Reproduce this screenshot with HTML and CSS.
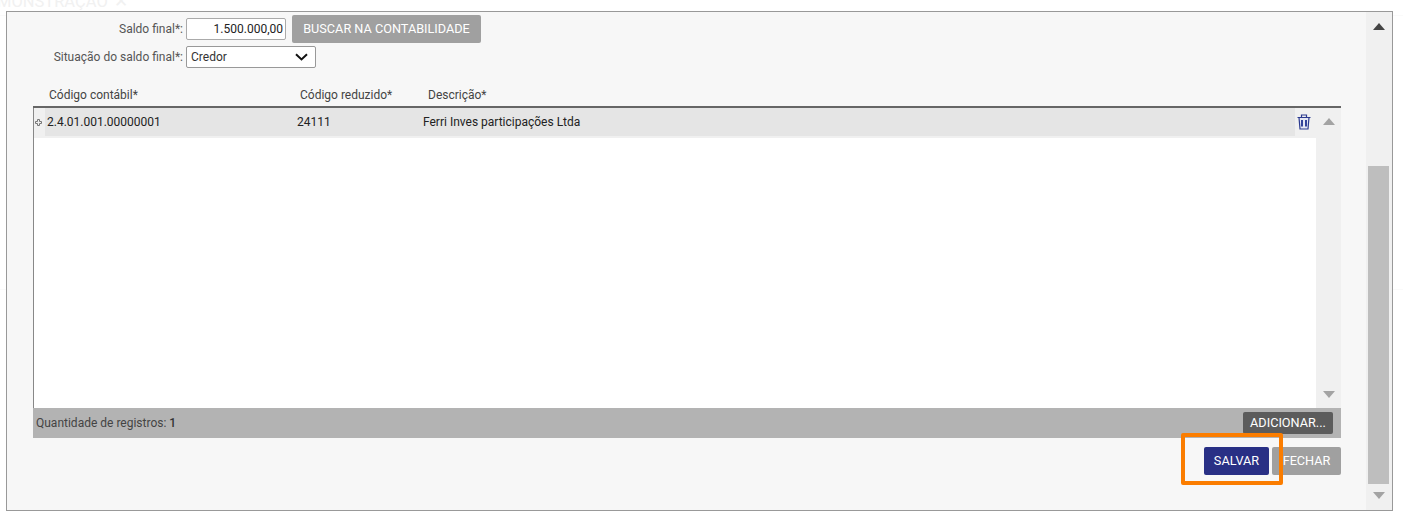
FILE: index.html
```html
<!DOCTYPE html>
<html lang="pt-BR">
<head>
<meta charset="utf-8">
<title>Saldo final</title>
<link rel="stylesheet" href="styles.css">
</head>
<body>
<div class="ghost ghost-title">MONSTRAÇÃO <span class="ghost-x">✕</span></div>
<div class="ghost-line top"></div>
<div class="ghost-line mid"></div>
<section class="dialog">
  <div class="content">
    <div class="form-row first">
      <label class="label">Saldo final*:</label>
      <input class="money" value="1.500.000,00">
      <button class="btn grey lookup">BUSCAR NA CONTABILIDADE</button>
    </div>
    <div class="form-row second">
      <label class="label">Situação do saldo final*:</label>
      <div class="select">
        <span>Credor</span>
        <svg width="13" height="8" viewBox="0 0 13 8"><path d="M1 1.200 6.500 6.400 12 1.200" fill="none" stroke="#111" stroke-width="2"/></svg>
      </div>
    </div>
    <div class="grid">
      <div class="grid-head">
        <span class="h1">Código contábil*</span>
        <span class="h2">Código reduzido*</span>
        <span class="h3">Descrição*</span>
      </div>
      <div class="grid-main">
        <div class="grid-body">
          <div class="row">
            <span class="expander"><svg width="7" height="7" viewBox="0 0 7 7"><path d="M2.500.5h2v2h2v2h-2v2h-2v-2h-2v-2h2z" fill="#eee" stroke="#777" stroke-width="1"/></svg></span>
            <span class="cell c1">2.4.01.001.00000001</span>
            <span class="cell c2">24111</span>
            <span class="cell c3">Ferri Inves participações Ltda</span>
            <span class="trash">
              <svg width="14" height="16" viewBox="0 0 14 16"><path d="M2 3.500l1 11.500h8l1-11.500z" fill="#e4e7f4"/><path d="M.5 3.500h13M4.500 3.500V1h5v2.500M2 3.500l1 11.500h8l1-11.500" fill="none" stroke="#2b3a8f" stroke-width="1.200"/><path d="M5 6v6.500M9 6v6.500" stroke="#33439a" stroke-width="2"/></svg>
            </span>
          </div>
          <div class="row-gap"></div>
        </div>
        <div class="inner-scroll">
          <svg width="12" height="7" viewBox="0 0 12 7"><path d="M6 0 12 7H0z" fill="#a3a3a3"/></svg>
          <svg width="12" height="7" viewBox="0 0 12 7"><path d="M0 0H12L6 7z" fill="#a3a3a3"/></svg>
        </div>
      </div>
      <div class="grid-foot">
        <span class="count">Quantidade de registros: <b>1</b></span>
        <button class="btn dark add">ADICIONAR...</button>
      </div>
    </div>
    <div class="actions">
      <button class="btn navy save">SALVAR</button>
      <button class="btn grey close">FECHAR</button>
    </div>
  </div>
  <div class="outer-scroll">
    <svg width="12" height="7" viewBox="0 0 12 7"><path d="M6 0 12 7H0z" fill="#444"/></svg>
    <div class="thumb-track"><div class="thumb"></div></div>
    <svg width="12" height="7" viewBox="0 0 12 7"><path d="M0 0H12L6 7z" fill="#a3a3a3"/></svg>
  </div>
  <div class="highlight"></div>
</section>
</body>
</html>
```
FILE: styles.css
```css
* { box-sizing: border-box; }
html, body { margin: 0; height: 100%; }
body {
  background: #fff;
  font-family: Roboto, "Liberation Sans", sans-serif;
  font-size: 12px;
  color: #222;
  padding: 11px 10px 14px 6px;
  position: relative;
  overflow: hidden;
}
.ghost { position: absolute; color: #f1f1f1; }
.ghost-title { left: -3px; top: -8px; font-size: 16.500px; white-space: nowrap; }
.ghost-x { margin-left: 2px; }
.ghost-line { position: absolute; left: 0; right: 0; height: 1px; background: #fafafa; }
.ghost-line.top { top: 15px; }
.ghost-line.mid { top: 289px; }
.dialog {
  position: relative;
  width: 1387px;
  height: 500px;
  display: flex;
  background: #f7f7f7;
  border: 1px solid #999;
}
.content { flex: 1; min-width: 0; padding: 2px 25px 0 26px; }
.form-row { display: flex; align-items: center; }
.first { height: 30px; }
.second { height: 27px; margin-top: -1px; }
.label { width: 153px; text-align: right; padding-right: 3px; color: #555; font-size: 12px; }
.money {
  width: 100px; height: 22px; padding: 0 2px 0 0;
  border: 1px solid #aaa; border-radius: 2px; background: #fff;
  text-align: right; font: 12px Roboto, sans-serif; color: #222;
}
.btn {
  border: 0; border-radius: 2px; color: #fff; font-family: Roboto, sans-serif;
  font-size: 12.700px; font-weight: 400; padding: 0 0 2px; text-align: center;
}
.grey { background: #a0a0a0; }
.lookup { width: 189px; height: 28px; margin-left: 6px; }
.select {
  width: 130px; height: 22px; display: flex; align-items: center; justify-content: space-between;
  padding: 0 7px 0 4px; border: 1px solid #999; border-radius: 2px; background: #fff; color: #333;
}
.grid { margin: 8px 0 0 0; }
.grid-head { position: relative; height: 28px; color: #444; }
.grid-head span { position: absolute; top: 10px; }
.h1 { left: 16px; }
.h2 { left: 267px; }
.h3 { left: 395px; }
.grid-main { display: flex; height: 302px; border-top: 2px solid #666; }
.grid-body { flex: 1; min-width: 0; background: #fff; border-left: 1px solid #888; }
.row { position: relative; height: 28px; display: flex; align-items: center; background: #f0f0f0; }
.row-gap { height: 2px; background: #f0f0f0; }
.expander { position: relative; width: 11px; display: flex; padding-left: 1px; }
.cell { position: absolute; top: 7px; color: #222; }
.row::before { content: ""; position: absolute; left: 11px; top: 0; bottom: 0; width: 1250px; background: #e5e5e5; }
.c1 { left: 13px; }
.c2 { left: 263px; }
.c3 { left: 389px; }
.trash { position: absolute; left: 1263px; top: 6px; }
.inner-scroll {
  width: 25px; display: flex; flex-direction: column; justify-content: space-between; align-items: center;
  background: #f0f0f0; padding: 10px 0 10px;
}
.grid-foot {
  height: 30px; display: flex; align-items: center; justify-content: space-between;
  background: #b3b3b3; padding: 0 8px 0 3px; color: #444;
}
.count { margin-top: -1px; }
.count b { font-weight: 500; color: #333; }
.dark { background: #5c5c5c; }
.add { width: 90px; height: 22px; }
.actions { display: flex; justify-content: flex-end; gap: 3px; margin-top: 9px; }
.actions .btn { height: 28px; }
.navy { background: #293085; }
.save { width: 65px; }
.close { width: 69px; }
.outer-scroll {
  width: 26px; background: #f0f0f0; display: flex; flex-direction: column; align-items: center;
  padding: 11px 0 11px;
}
.thumb-track { flex: 1; width: 100%; padding: 136px 3px 0 2px; }
.thumb { width: 21px; height: 318px; background: #bebebe; }
.highlight {
  position: absolute; left: 1174px; top: 421px; width: 102px; height: 52px;
  border: 4px solid #fb7d00; border-radius: 2px;
}
```
